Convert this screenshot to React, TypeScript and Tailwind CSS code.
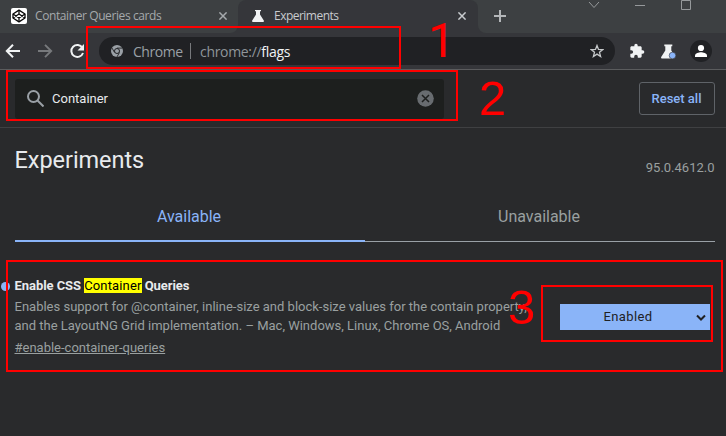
import React from "react";

const roboto = "font-['Roboto','Liberation_Sans',sans-serif]";
const segoe = "font-['Open_Sans','Noto_Sans',sans-serif]";

function CodepenIcon() {
  return (
    <svg className="h-4 w-4 shrink-0 rounded-[2px] bg-white" viewBox="0 0 16 16" fill="none" stroke="#080808" strokeWidth="1.3" strokeLinejoin="round">
      <path d="M8 2.1 14 6v4l-6 3.9L2 10V6z" />
      <path d="M2 6l6 4 6-4M2 10l6-4 6 4M8 2.1V6M8 10v3.9" />
    </svg>
  );
}

function FlaskIcon() {
  return (
    <svg className="h-3 w-3 shrink-0" viewBox="0 0 12 12" fill="#f1f3f4">
      <path d="M3 0h6v1.2H8v3.3l3.8 6.1c.4.7 0 1.4-.8 1.4H1c-.8 0-1.2-.7-.8-1.4L4 4.5V1.2H3z" />
    </svg>
  );
}

function CloseIcon({ color }: { color: string }) {
  return (
    <svg className="h-2 w-2 shrink-0" viewBox="0 0 8 8" stroke={color} strokeWidth="1.5">
      <path d="M.4.4l7.2 7.2M7.6.4L.4 7.6" />
    </svg>
  );
}

function TabStrip() {
  return (
    <div className={`relative flex h-[33px] bg-[#3d4042] text-[12px] ${segoe}`}>
      <div className="flex w-[238px] items-center rounded-br-[8px] pl-[11px] pr-[11px] pb-px">
        <CodepenIcon />
        <span className="ml-2 flex-1 whitespace-nowrap tracking-[-0.4px] text-[#a5a9ac]">Container Queries cards</span>
        <CloseIcon color="#a5a9ac" />
      </div>
      <div className="flex w-[240px] items-center rounded-t-[8px] bg-[#35363a] pl-[14px] pr-[12px] pb-px">
        <FlaskIcon />
        <span className="ml-[10px] flex-1 tracking-[-0.52px] text-[#c8cbce]">Experiments</span>
        <CloseIcon color="#c8cbce" />
      </div>
      <svg className="ml-[16px] mt-[10px] h-3 w-3" viewBox="0 0 12 12" stroke="#b4b7b9" strokeWidth="2">
        <path d="M6 0v12M0 6h12" />
      </svg>
      <svg className="ml-[82px] h-3 w-[106px]" viewBox="0 0 106 12" fill="none" stroke="#96999b">
        <path d="M1 2l5 5.500L11 2M47 5.500h10M93.500.500h9v9h-9z" />
      </svg>
      <svg className="absolute bottom-0 left-[230px] h-2 w-[256px]" viewBox="0 0 256 8" fill="#35363a">
        <path d="M0 8a8 8 0 0 0 8-8v8zM256 8a8 8 0 0 1-8-8v8z" />
      </svg>
    </div>
  );
}

function Toolbar() {
  return (
    <div className="flex h-[37px] items-center border-b border-[#5b5c5e] bg-[#35363a]">
      <svg className="ml-[5px] h-4 w-4 shrink-0" viewBox="0 0 16 16" fill="none" stroke="#f1f3f4" strokeWidth="2">
        <path d="M15 8H2.5M8 1.800 1.800 8 8 14.200" />
      </svg>
      <svg className="ml-4 h-4 w-4 shrink-0" viewBox="0 0 16 16" fill="none" stroke="#77797c" strokeWidth="1.9">
        <path d="M1 8h12.5M8 1.800 14.200 8 8 14.200" />
      </svg>
      <svg className="ml-4 h-4 w-4 shrink-0" viewBox="0 0 16 16" fill="none" stroke="#f1f3f4" strokeWidth="2">
        <path d="M13.4 4.700A6 6 0 1 0 14 10" />
        <path d="M15 1v6.500H8.500z" fill="#f1f3f4" stroke="none" />
      </svg>
      <div className={`ml-[14px] flex h-[28px] w-[516px] shrink-0 items-center rounded-full bg-[#202124] pl-3 text-[14px] ${segoe}`}>
        <svg className="h-3 w-3 shrink-0" viewBox="0 0 12 12">
          <circle cx="6" cy="6" r="6" fill="#9aa0a6" />
          <circle cx="6" cy="6" r="2.5" fill="#9aa0a6" stroke="#202124" />
          <path d="M6 3.100h5.300M3.500 7.400.9 2.900M8.500 7.500 5.900 12" fill="none" stroke="#202124" strokeWidth=".9" />
        </svg>
        <span className="ml-[10px] w-[57px] tracking-[-0.45px] text-[#9aa0a6]">Chrome</span>
        <span className="h-4 w-px bg-[#77797c]" />
        <span className="ml-[9px] flex-1 whitespace-nowrap tracking-[-0.32px] text-[#8f959a]">
          chrome://<span className="text-[#f1f3f4]">flags</span>
        </span>
        <svg className="mr-[11px] h-[14px] w-[14px]" viewBox="0 0 14 14" fill="none" stroke="#c5c8ca" strokeWidth="1.3">
          <path d="m7 1.500 1.500 3.900 4.300.2-3.300 2.700 1.100 4.200L7 10.100l-3.600 2.400 1.100-4.200L1.200 5.600l4.300-.2z" />
        </svg>
      </div>
      <svg className="ml-[14px] h-[16px] w-[16px] shrink-0" viewBox="0 0 24 24" fill="#f1f3f4">
        <path d="M20.500 11H19V7c0-1.100-.9-2-2-2h-4V3.500a2.500 2.500 0 0 0-5 0V5H4c-1.100 0-2 .9-2 2v3.800h1.500a2.700 2.700 0 0 1 0 5.400H2V20c0 1.100.9 2 2 2h3.800v-1.500a2.700 2.700 0 0 1 5.400 0V22H17c1.100 0 2-.9 2-2v-4h1.500a2.500 2.500 0 0 0 0-5z" />
      </svg>
      <svg className="ml-[16px] h-[15px] w-[15px] shrink-0" viewBox="0 0 15 15" fill="#f1f3f4">
        <path d="M3.300.500h8v1.700h-1v4.300l3 5-1 3H1.200c-.9 0-1.400-.8-1-1.500l4.100-6.500V2.200h-1z" />
        <circle cx="11.500" cy="11.500" r="3.300" fill="#8ab4f8" stroke="#35363a" strokeWidth=".6" />
      </svg>
      <svg className="ml-[14px] h-[22px] w-[22px] shrink-0" viewBox="0 0 22 22">
        <circle cx="11" cy="11" r="11" fill="#202124" />
        <g fill="#fff">
          <circle cx="11" cy="8" r="3.1" />
          <path d="M5 17v-1.500c0-2.200 4-3.300 6-3.300s6 1.100 6 3.300V17z" />
        </g>
      </svg>
    </div>
  );
}

function SearchHeader() {
  return (
    <div className="flex h-[58px] items-center justify-between border-b border-[#3f4042] pl-[15px] pr-[11px]">
      <div className="flex h-10 w-[429px] items-center rounded-[3px] bg-[#1d1f1e] pl-3 pr-[10px]">
        <svg className="h-[17px] w-[17px] shrink-0" viewBox="0 0 17 17" fill="none" stroke="#9aa0a6" strokeWidth="2">
          <circle cx="6.500" cy="6.500" r="5.500" />
          <path d="m10.500 10.500 6 6" />
        </svg>
        <span className="ml-[8px] flex-1 text-[13px] text-[#e8eaed]">Container</span>
        <svg className="h-[17px] w-[17px]" viewBox="0 0 17 17">
          <circle cx="8.500" cy="8.500" r="8.300" fill="#686c70" />
          <path d="m5 5 7 7M12 5l-7 7" stroke="#1d1f1e" strokeWidth="1.5" />
        </svg>
      </div>
      <button className="h-[33px] w-[76px] rounded-[3px] border border-[#5f6368] pr-px text-[13px] font-medium text-[#8ab4f8]">Reset all</button>
    </div>
  );
}

function Flag() {
  return (
    <section className="relative flex pl-[14.5px] pt-[34px]">
      <i className="absolute left-[1px] top-[40px] h-[9px] w-[9px] rounded-full bg-[#8ab4f8]" />
      <div className="w-[545.5px] shrink-0 whitespace-nowrap text-[13px] leading-[19px] text-[#9aa0a0]">
        <h3 className="h-[21px] font-bold tracking-[-0.06px] text-[#e8eaed]">
          Enable CSS <mark className="bg-[#ffff00] font-normal tracking-[0.15px] text-black">Container</mark> Queries
        </h3>
        <p>Enables support for @container, inline-size and block-size values for the contain property,</p>
        <p>and the LayoutNG Grid implementation. – Mac, Windows, Linux, Chrome OS, Android</p>
        <a className="mt-[3px] block underline">#enable-container-queries</a>
      </div>
      <div className="mt-[28px] flex h-[26px] w-[150px] items-center bg-[#8ab4f8] pr-1 pb-px text-[13px] text-[#202124]">
        <span className="flex-1 text-center tracking-[0.4px]">Enabled</span>
        <svg className="h-[10px] w-[10px]" viewBox="0 0 10 10" fill="none" stroke="#202124" strokeWidth="2">
          <path d="m1 3.500 4 4 4-4" />
        </svg>
      </div>
    </section>
  );
}

export default function App() {
  return (
    <main className={`relative h-[436px] w-[726px] overflow-hidden bg-[#292a2c] ${roboto}`}>
      <TabStrip />
      <Toolbar />
      <SearchHeader />
      <div className="flex h-[64px] justify-between pl-[14.5px] pr-[11.5px] text-[#e8eaed]">
        <h1 className="pt-[17px] text-[23.5px] leading-[30px] tracking-[-0.05px]">Experiments</h1>
        <span className="pt-[30px] text-[13px] leading-5 text-[#9aa0a0]">95.0.4612.0</span>
      </div>
      <nav className="ml-[15px] flex h-[50px] w-[700px] text-center text-[16px] leading-[50px]">
        <span className="w-1/2 border-b-2 border-[#8ab4f8] pr-[2px] text-[#8ab4f8]">Available</span>
        <span className="w-1/2 border-b border-[#9aa0a6] pr-[2px] text-[#9aa0a0]">Unavailable</span>
      </nav>
      <Flag />

      <div className="absolute left-[86px] top-[26px] h-[43px] w-[315px] border-2 border-[#ff0000]" />
      <div className="absolute left-[6px] top-[70px] h-[51px] w-[452px] border-2 border-[#ff0000]" />
      <div className="absolute left-[6px] top-[260px] h-[112px] w-[717px] border-2 border-[#ff0000]" />
      <div className="absolute left-[541px] top-[285px] h-[57px] w-[172px] border-2 border-[#ff0000]" />
      <div className="font-['Liberation_Sans',Arial,sans-serif] text-[49px] leading-none text-[#ff0000]">
        <span className="absolute left-[428px] top-[17px] font-['Roboto',sans-serif] text-[48px]">1</span>
        <span className="absolute left-[479px] top-[74px]">2</span>
        <span className="absolute left-[508px] top-[283px]">3</span>
      </div>
    </main>
  );
}
